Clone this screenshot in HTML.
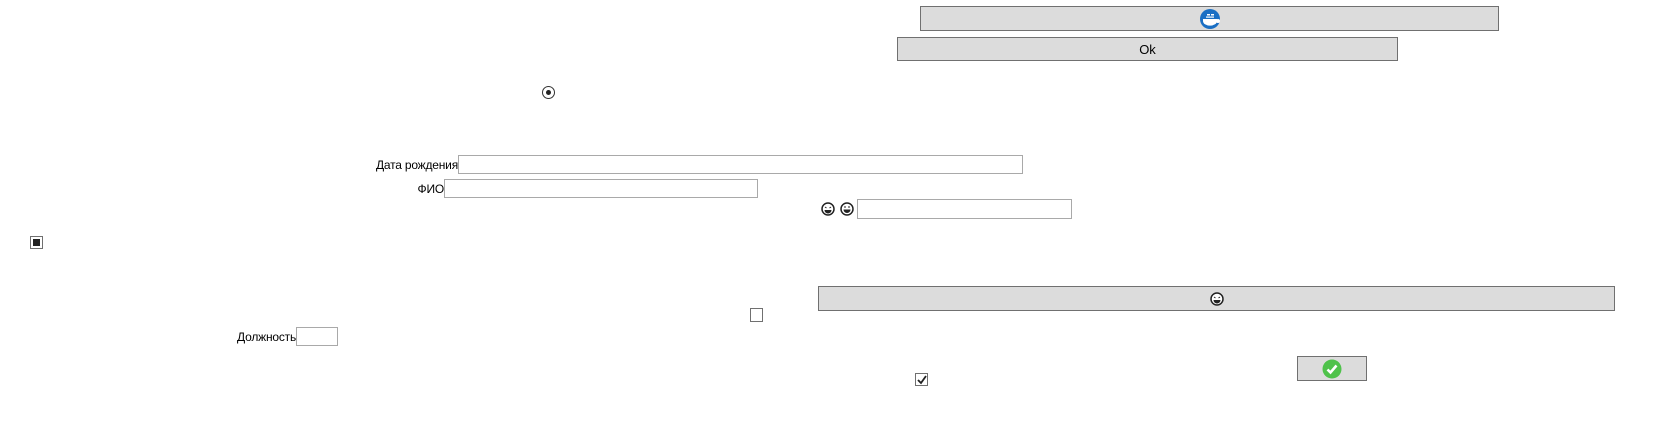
<!DOCTYPE html>
<html><head><meta charset="utf-8"><style>
body{margin:0;width:1680px;height:437px;background:#fff;position:relative;overflow:hidden;font-family:"Liberation Sans",sans-serif;font-size:12px;color:#000}
.a{position:absolute;box-sizing:border-box}
.btn{background:#dcdcdc;border:1px solid #707070;display:flex;align-items:center;justify-content:center}
.in{border:1px solid #a9a9a9;background:#fff}
.lbl{text-align:right;line-height:18px;letter-spacing:-0.2px}
.cb{border:1px solid #707070;background:#fff}
</style></head><body>
<div class="a btn" style="left:920px;top:6px;width:579px;height:25px">
<svg width="22" height="22" viewBox="0 0 22 22"><circle cx="11" cy="11" r="10" fill="#1a6fc4"/><path d="M4 11h14v2a6 4 0 0 1-14 0z" fill="#fff"/><rect x="8" y="6" width="3" height="1.5" fill="#fff"/><rect x="12" y="6" width="3" height="1.5" fill="#fff"/><rect x="7" y="8.5" width="8" height="1.2" fill="#fff"/><circle cx="19" cy="13" r="2" fill="#fff"/></svg></div>
<div class="a btn" style="left:897px;top:37px;width:501px;height:24px;font-size:13px">Ok</div>
<div class="a" style="left:542px;top:86px;width:13px;height:13px;border:1px solid #333;border-radius:50%;background:#fff"><div class="a" style="left:3px;top:3px;width:5px;height:5px;border-radius:50%;background:#222"></div></div>
<div class="a lbl" style="left:300px;top:156px;width:158px">Дата рождения</div>
<div class="a in" style="left:458px;top:155px;width:565px;height:19px"></div>
<div class="a lbl" style="left:300px;top:180px;width:144px">ФИО</div>
<div class="a in" style="left:444px;top:179px;width:314px;height:19px"></div>
<svg class="a" style="left:821px;top:202px" width="14" height="14" viewBox="0 0 14 14"><circle cx="7" cy="7" r="6" fill="#fff" stroke="#222" stroke-width="1.5"/><path d="M3.5 8h7a3.5 3.5 0 0 1-7 0z" fill="#222"/><path d="M4 5l1.5 1M10 5L8.5 6" stroke="#222"/></svg>
<svg class="a" style="left:840px;top:202px" width="14" height="14" viewBox="0 0 14 14"><circle cx="7" cy="7" r="6" fill="#fff" stroke="#222" stroke-width="1.5"/><path d="M3.5 7.5h7a3.5 3.5 0 0 1-7 0z" fill="#222"/><path d="M4 5h2M8 5h2" stroke="#222"/></svg>
<div class="a in" style="left:857px;top:199px;width:215px;height:20px"></div>
<div class="a cb" style="left:30px;top:236px;width:13px;height:13px"><div class="a" style="left:2px;top:2px;width:7px;height:7px;background:#222"></div></div>
<div class="a cb" style="left:750px;top:308px;width:13px;height:14px"></div>
<div class="a lbl" style="left:150px;top:328px;width:146px">Должность</div>
<div class="a in" style="left:296px;top:327px;width:42px;height:19px"></div>
<div class="a btn" style="left:818px;top:286px;width:797px;height:25px"><svg width="14" height="14" viewBox="0 0 14 14"><circle cx="7" cy="7" r="6" fill="#fff" stroke="#222" stroke-width="1.5"/><path d="M3.5 8h7a3.5 3.5 0 0 1-7 0z" fill="#222"/><path d="M4 5l1.5 1M10 5L8.5 6" stroke="#222"/></svg></div>
<div class="a cb" style="left:915px;top:373px;width:13px;height:13px"><svg class="a" style="left:1px;top:1px" width="10" height="10" viewBox="0 0 10 10"><path d="M1 5l3 3 5-7" stroke="#222" stroke-width="1.8" fill="none"/></svg></div>
<div class="a btn" style="left:1297px;top:356px;width:70px;height:25px"><svg width="20" height="20" viewBox="0 0 20 20"><circle cx="10" cy="10" r="9.5" fill="#4fc24b"/><path d="M5.5 10.5l3 3 6-7" stroke="#fff" stroke-width="2.6" fill="none"/></svg></div>
</body></html>
